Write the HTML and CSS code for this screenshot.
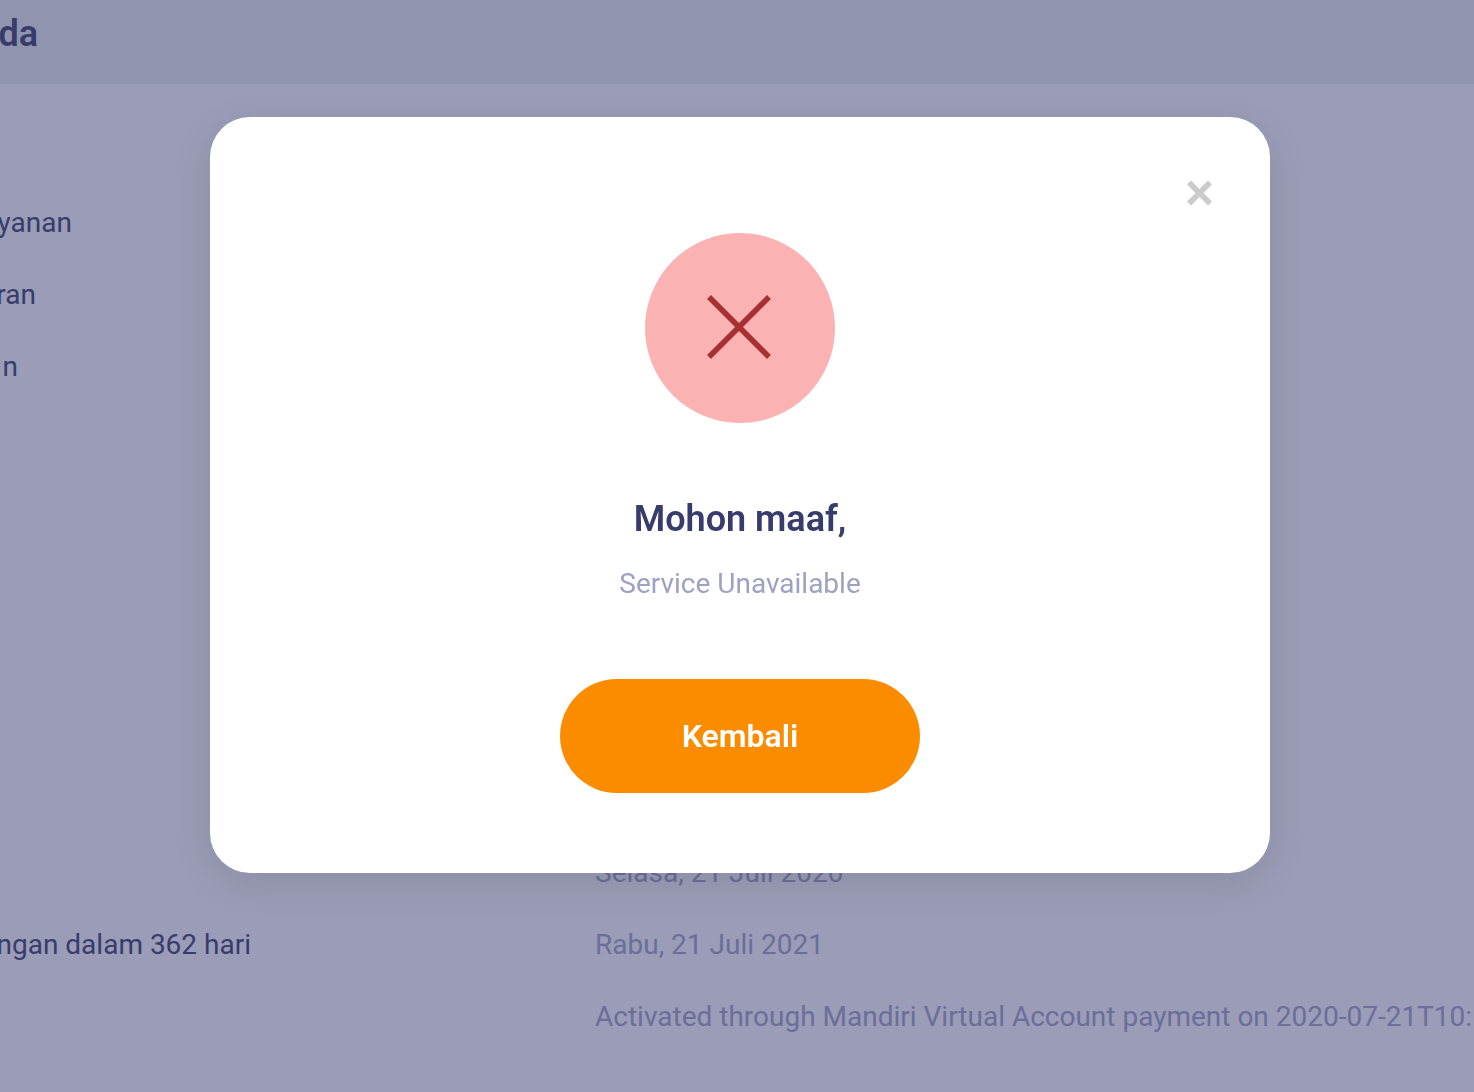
FILE: index.html
```html
<!DOCTYPE html>
<html lang="id">
<head>
<meta charset="utf-8">
<meta name="viewport" content="width=device-width, initial-scale=1">
<title>Mohon maaf</title>
<link rel="stylesheet" href="styles.css">
</head>
<body>
<header class="topbar"><h1 class="topbar-title clip clip-title">da</h1></header>
<main class="content">
  <ul class="summary">
    <li class="clip clip-long">yanan</li>
    <li class="clip clip-medium">ran</li>
    <li class="clip clip-short">n</li>
  </ul>
  <table class="history">
    <tr><th scope="row"></th><td>Selasa, 21 Juli 2020</td></tr>
    <tr><th scope="row"><span class="clip clip-row">ngan dalam 362 hari</span></th><td>Rabu, 21 Juli 2021</td></tr>
    <tr><th scope="row"></th><td>Activated through Mandiri Virtual Account payment on 2020-07-21T10:</td></tr>
  </table>
</main>
<div class="overlay">
  <section class="dialog" role="dialog" aria-modal="true" aria-labelledby="dialog-title">
    <button class="close" type="button" aria-label="Tutup">
      <svg width="26" height="26" viewBox="0 0 26 26"><path d="M3 2.5l21 21M24 2.5l-21 21" stroke="#cbcbcb" stroke-width="5.6" fill="none"/></svg>
    </button>
    <svg class="status" width="190" height="190" viewBox="0 0 190 190" aria-hidden="true">
      <circle cx="95" cy="95" r="95" fill="#fab2b3"/>
      <path d="M64 64l60 60M124 64l-60 60" stroke="#a83032" stroke-width="5.6" fill="none"/>
    </svg>
    <h2 class="dialog-title" id="dialog-title">Mohon maaf,</h2>
    <p class="dialog-text">Service Unavailable</p>
    <button class="back" type="button">Kembali</button>
  </section>
</div>
</body>
</html>
```
FILE: styles.css
```css
* { box-sizing: border-box; }

body {
  margin: 0;
  min-height: 100vh;
  overflow: hidden;
  background: #9b9cb7;
  color: #383c6c;
  font-family: Roboto, "Liberation Sans", sans-serif;
  font-size: 28px;
  line-height: 36px;
}

.topbar {
  height: 84px;
  padding-top: 16px;
  background: #9194ae;
}

.topbar-title {
  margin: 0;
  font-size: 36px;
  font-weight: 600;
}

/* Labels that run off the left edge of the window. */
.clip {
  display: flex;
  justify-content: flex-end;
  white-space: nowrap;
}
.clip-title { width: 38px; }
.clip-long { width: 72px; }
.clip-medium { width: 36px; }
.clip-short { width: 18px; }
.clip-row { width: 251px; }

.content { padding-top: 121px; }

.summary {
  display: grid;
  gap: 36px;
  margin: 0;
  padding: 0;
  list-style: none;
}

.history {
  width: 100%;
  margin-top: 452px;
  border-collapse: collapse;
  table-layout: fixed;
}
.history th,
.history td {
  height: 72px;
  padding: 0;
  font-weight: 400;
  text-align: left;
  white-space: nowrap;
}
.history th { width: 595px; }
.history td { color: #6b6e9a; }

.overlay {
  position: fixed;
  inset: 0;
  display: flex;
  align-items: flex-start;
  justify-content: center;
  padding: 117px 0 0 6px;
}

.dialog {
  display: flex;
  flex-direction: column;
  align-items: center;
  width: 100%;
  max-width: 1060px;
  padding: 60px 55px 80px;
  border-radius: 40px;
  background: #fff;
  box-shadow: 0 10px 40px rgba(0, 0, 0, 0.1);
}

.close {
  display: grid;
  place-items: center;
  align-self: flex-end;
  width: 32px;
  height: 32px;
  padding: 0;
  border: 0;
  background: none;
}

.status { margin-top: 24px; }

.dialog-title {
  margin: 72px 0 0;
  font-size: 36px;
  font-weight: 600;
  line-height: 48px;
}

.dialog-text {
  margin: 23px 0 0;
  color: #9da2c2;
}

.back {
  width: 360px;
  height: 114px;
  margin-top: 77px;
  border: 0;
  border-radius: 57px;
  background: #fb8c00;
  color: #fff;
  font: 600 32px/40px Roboto, "Liberation Sans", sans-serif;
}
```
